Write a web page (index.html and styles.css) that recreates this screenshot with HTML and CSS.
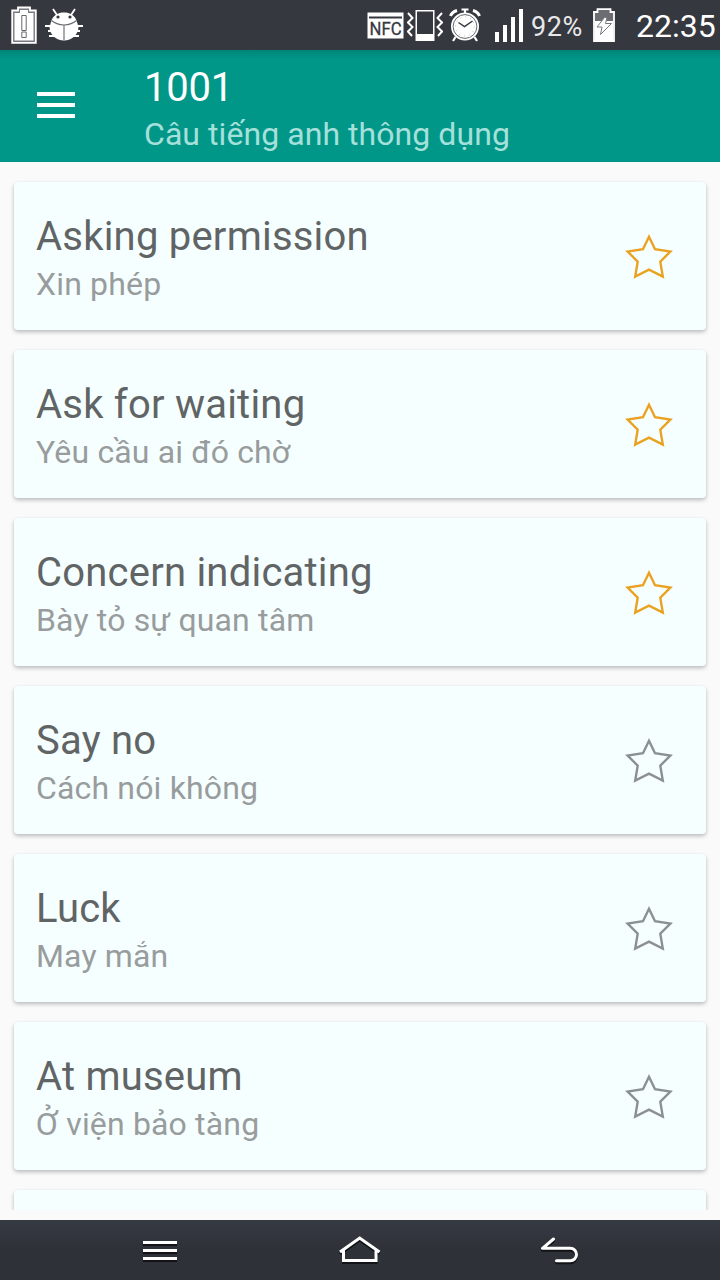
FILE: index.html
```html
<!DOCTYPE html>
<html lang="vi">
<head>
    <meta charset="UTF-8">
    <meta name="viewport" content="width=device-width, initial-scale=1.0">
    <title>1001 Câu tiếng anh thông dụng</title>
    <link rel="stylesheet" href="styles.css">
</head>
<body>

    <svg class="defs" width="0" height="0">
        <symbol id="star" viewBox="0 0 48 48">
            <path d="M24 2.8L30 15.2L45.4 17.5L35.3 27.6L37.8 42.6L24 35.6L10.2 42.6L12.7 27.6L2.6 17.5L18 15.2Z" fill="none" stroke="currentColor" stroke-width="2.4"/>
        </symbol>
    </svg>

    <div class="status">
        <svg class="warn" width="26" height="38" viewBox="0 0 26 38">
            <path d="M1.2 4.5H7V1.5H19V4.5H24.8V36.8H1.2Z" fill="#77797e" stroke="#fff" stroke-width="1.8"/>
            <path d="M3.5 7H9V4H17V7H22.5V34.5H3.5Z" fill="#fff"/>
            <path d="M10.8 9.5H15.2V24.5H10.8ZM10.8 26H15.2V31.5H10.8Z" fill="#fff" stroke="#66686e" stroke-width="1"/>
        </svg>
        <svg class="bug" width="38" height="34" viewBox="0 0 38 34">
            <path d="M8 1L12 7M30 1L26 7M0 18H8M3 23H9M4 28H10M38 18H30M35 23H29M34 28H28" stroke="#fff" stroke-width="1.8"/>
            <path d="M6 14C8 7 13 4.5 19 4.5S30 7 32 14L33.5 19C33 27 27 32.5 19 32.5S5 27 4.5 19Z" fill="#fff"/>
            <path d="M6.5 12.5Q11 16.5 19 17Q27 16.5 31.5 12.5M19 17V32" fill="none" stroke="#66686e" stroke-width="1.1"/>
            <circle cx="13" cy="9" r="1.6" fill="#36383f"/>
            <circle cx="25" cy="9" r="1.6" fill="#36383f"/>
        </svg>

        <svg class="nfc" width="37" height="27" viewBox="0 0 37 27">
            <path d="M.5.5H36.5V26.5H.5Z" fill="#fff"/>
            <path d="M2 5.5H35" stroke="#36383f" stroke-width="2"/>
            <text x="2.5" y="23" textLength="32" lengthAdjust="spacingAndGlyphs">NFC</text>
        </svg>
        <svg class="vibrate" width="36" height="32" viewBox="0 0 36 32">
            <path d="M1 4L5.5 9L1 13.5L5.5 18L1 22.5L5 27M35 4L30.5 9L35 13.5L30.5 18L35 22.5L31 27" fill="none" stroke="#fff" stroke-width="2"/>
            <path d="M8.5 1H27.5V32H8.5Z" fill="#fff"/>
            <path d="M10 2.5H26V25H10Z" fill="#36383f"/>
        </svg>
        <svg class="alarm" width="32" height="34" viewBox="0 0 32 34">
            <circle cx="16" cy="18.5" r="13.2" fill="#fff" stroke="#fff" stroke-width="1.6"/>
            <circle cx="16" cy="18.5" r="11.9" fill="none" stroke="#66686e" stroke-width="1"/>
            <circle cx="16" cy="18.5" r="9.5" fill="none" stroke="#b5b6ba" stroke-width="1" stroke-dasharray="1 3.97"/>
            <path d="M9.5 14.5L15.5 18.5L23.5 13" fill="none" stroke="#36383f" stroke-width="1.5"/>
            <path d="M1.5 8Q3 4 8 2.5M30.5 8Q29 4 24 2.5" fill="none" stroke="#fff" stroke-width="3"/>
            <path d="M12.5 1.5H19.5M16 2V5M6.5 29L4 33M25.5 29L28 33" stroke="#fff" stroke-width="2.2"/>
        </svg>
        <svg class="signal" width="28" height="33" viewBox="0 0 28 33">
            <path d="M0 23H4V33H0ZM8 16H12V33H8ZM16 8H20V33H16ZM24 0H28V33H24Z" fill="#fff"/>
        </svg>
        <span class="percent">92%</span>
        <svg class="battery" width="22" height="34" viewBox="0 0 22 34">
            <path d="M1 4H4.5V1.2H17.5V4H21V33H1Z" fill="#6c6d72" stroke="#fff" stroke-width="1.8"/>
            <path d="M2 13H20V32H2Z" fill="#fff"/>
            <path d="M11.5 9.5L4 19H9L7.5 26.5L18.5 15.5H12.5L14 9.5Z" fill="#fff" stroke="#77797f" stroke-width="1"/>
        </svg>
        <span class="clock">22:35</span>
    </div>

    <header class="toolbar">
        <div class="menu"><i></i><i></i><i></i></div>
        <div>
            <h1>1001</h1>
            <p class="subtitle">Câu tiếng anh thông dụng</p>
        </div>
    </header>

    <main class="list">
        <div class="card">
            <div>
                <h2>Asking permission</h2>
                <p>Xin phép</p>
            </div>
            <svg class="star on"><use href="#star"/></svg>
        </div>
        <div class="card">
            <div>
                <h2>Ask for waiting</h2>
                <p>Yêu cầu ai đó chờ</p>
            </div>
            <svg class="star on"><use href="#star"/></svg>
        </div>
        <div class="card">
            <div>
                <h2>Concern indicating</h2>
                <p>Bày tỏ sự quan tâm</p>
            </div>
            <svg class="star on"><use href="#star"/></svg>
        </div>
        <div class="card">
            <div>
                <h2>Say no</h2>
                <p>Cách nói không</p>
            </div>
            <svg class="star"><use href="#star"/></svg>
        </div>
        <div class="card">
            <div>
                <h2>Luck</h2>
                <p>May mắn</p>
            </div>
            <svg class="star"><use href="#star"/></svg>
        </div>
        <div class="card">
            <div>
                <h2>At museum</h2>
                <p>Ở viện bảo tàng</p>
            </div>
            <svg class="star"><use href="#star"/></svg>
        </div>
        <div class="card"></div>
    </main>

    <nav class="navbar">
        <svg width="44" height="36" viewBox="0 0 44 36">
            <path d="M5 10.5H39M5 18.5H39M5 26.5H39" stroke-width="3"/>
        </svg>
        <svg width="44" height="36" viewBox="0 0 44 36">
            <path d="M2 20L21.7 6L41.5 20M5.5 18V28.5H38V18"/>
        </svg>
        <svg width="44" height="36" viewBox="0 0 44 36">
            <path d="M15.5 7L4.5 16.3H32.3A6.2 6.2 0 0 1 32.3 28.7H18.5" stroke-linecap="round" stroke-linejoin="round"/>
        </svg>
    </nav>

</body>
</html>
```
FILE: styles.css
```css
body {
    margin: 0;
    height: 1280px;
    display: flex;
    flex-direction: column;
    overflow: hidden;
    background: #fafafa;
    font-family: Roboto, "Noto Sans", sans-serif;
}

h1, h2, p {
    margin: 0;
    font-weight: 400;
    white-space: nowrap;
}

.defs {
    position: absolute;
}

/* status bar */
.status {
    height: 50px;
    flex: none;
    box-sizing: border-box;
    padding: 0 4px 0 11px;
    display: flex;
    align-items: center;
    background: #36383f;
    color: #fff;
}

.status svg {
    flex: none;
}

.bug {
    margin-left: 8px;
}

.nfc {
    margin-left: auto;
}

.nfc text {
    font-size: 18px;
    fill: #36383f;
    stroke: #36383f;
    stroke-width: 0.3px;
}

.vibrate {
    margin-left: 3px;
}

.alarm {
    margin-left: 6px;
}

.signal {
    margin-left: 14px;
}

.percent {
    width: 52px;
    margin-left: 8px;
    font-size: 27px;
    line-height: 50px;
    letter-spacing: 0.6px;
    padding-top: 3px;
    color: #e8e8ea;
}

.battery {
    margin-left: 10px;
}

.clock {
    width: 80px;
    margin-left: 21px;
    font-size: 32px;
    line-height: 50px;
    padding-top: 2px;
}

/* toolbar */
.toolbar {
    height: 112px;
    flex: none;
    box-sizing: border-box;
    padding: 14px 0 0 37px;
    display: flex;
    background: linear-gradient(#008578, #009688 9px);
    color: #fff;
}

.menu {
    width: 38px;
    margin: 28px 69px 0 0;
    display: flex;
    flex-direction: column;
    gap: 7px;
}

.menu i {
    height: 4px;
    background: #fff;
}

h1 {
    font-size: 40px;
    line-height: 47px;
    letter-spacing: -0.2px;
}

.subtitle {
    font-size: 32px;
    line-height: 46px;
    letter-spacing: 0.06px;
    color: #a6e0da;
}

/* list of topics */
.list {
    height: 1048px;
    flex: none;
    box-sizing: border-box;
    padding: 20px 14px 0;
    display: flex;
    flex-direction: column;
    gap: 20px;
    overflow: hidden;
}

.card {
    height: 148px;
    flex: none;
    box-sizing: border-box;
    padding: 31px 33px 0 22px;
    display: flex;
    justify-content: space-between;
    background: #f5ffff;
    border-radius: 4px;
    box-shadow: 0 2px 4px rgba(0, 0, 0, 0.26);
}

h2 {
    font-size: 40px;
    line-height: 48px;
    letter-spacing: 0.22px;
    color: #616464;
}

.card p {
    font-size: 32px;
    line-height: 47px;
    letter-spacing: 0.16px;
    color: #999c9c;
}

.star {
    width: 48px;
    height: 48px;
    margin-top: 21px;
    color: #8c9090;
}

.star.on {
    color: #eaa221;
}

/* navigation keys */
.navbar {
    height: 60px;
    flex: none;
    box-sizing: border-box;
    margin-top: 10px;
    padding: 0 138px;
    display: flex;
    align-items: center;
    justify-content: space-between;
    background: linear-gradient(#363a43, #2f3138 30px);
}

.navbar svg {
    fill: none;
    stroke: #fff;
    stroke-width: 3;
    filter: drop-shadow(0 2px 0 rgba(0, 0, 0, 0.6));
}
```
